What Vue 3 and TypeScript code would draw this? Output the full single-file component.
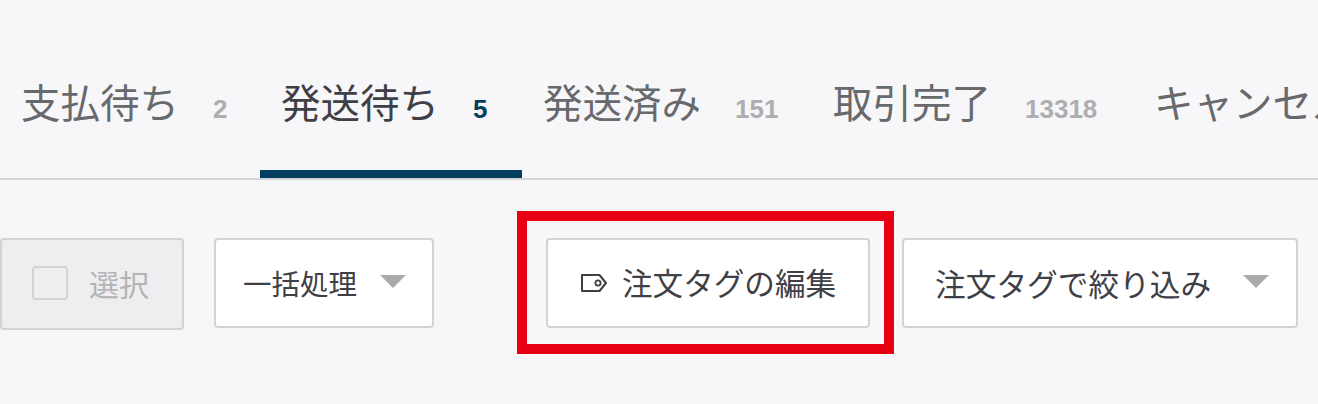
<script setup lang="ts">
const tabs = [
  { label: '支払待ち', count: '2', w: 260 },
  { label: '発送待ち', count: '5', w: 262, active: true },
  { label: '発送済み', count: '151', w: 290 },
  { label: '取引完了', count: '13318', w: 321 },
  { label: 'キャンセル', count: '', w: 300 },
]
</script>

<template>
  <div class="page">
    <nav class="tabs">
      <div
        v-for="t in tabs"
        :key="t.label"
        class="tab"
        :class="{ active: t.active }"
        :style="{ width: t.w + 'px' }"
      >
        <span class="label">{{ t.label }}</span>
        <span v-if="t.count" class="count">{{ t.count }}</span>
      </div>
    </nav>
    <div class="toolbar">
      <button class="btn select">
        <span class="check"></span>
        <span>選択</span>
      </button>
      <button class="btn bulk">
        <span>一括処理</span>
        <span class="caret"></span>
      </button>
      <div class="highlighted">
        <button class="btn tag">
          <svg class="tag-icon" width="28" height="22" viewBox="0 0 28 22" fill="none">
            <path d="M2 3H19.5L26 11L19.5 19H2Z" stroke="#3f4045" stroke-width="2" stroke-linejoin="round" />
            <circle cx="18" cy="11" r="2.6" stroke="#3f4045" stroke-width="1.8" />
          </svg>
          <span>注文タグの編集</span>
        </button>
        <span class="frame"></span>
      </div>
      <button class="btn filter">
        <span>注文タグで絞り込み</span>
        <span class="caret"></span>
      </button>
    </div>
  </div>
</template>

<style>
html, body { margin: 0; background: #f7f7f9; overflow: hidden; }
</style>

<style scoped>
.page {
  width: 1318px;
  height: 404px;
  overflow: hidden;
  background: #f7f7f9;
  font-family: "Liberation Sans", "Noto Sans CJK JP", sans-serif;
  color: #3f4045;
}
.tabs {
  display: flex;
  height: 178px;
  border-bottom: 2px solid #d3d3d6;
  overflow: hidden;
}
.tab {
  flex: none;
  box-sizing: border-box;
  height: 178px;
  padding: 79px 0 0 21px;
  display: flex;
  align-items: flex-start;
  white-space: nowrap;
  color: #68696d;
}
.label {
  font-size: 39.5px;
  line-height: 50px;
}
.count {
  margin-left: 34px;
  font-size: 26px;
  line-height: 60px;
  font-weight: 700;
  color: #aeaeb1;
}
.tab.active {
  border-bottom: 8px solid #03405f;
  color: #3f4045;
}
.tab.active .count { color: #03405f; }
.toolbar {
  display: flex;
  align-items: flex-start;
  padding-top: 58px;
}
.btn {
  box-sizing: border-box;
  height: 90px;
  margin: 0;
  display: flex;
  align-items: center;
  flex: none;
  background: #fff;
  border: 2px solid #d3d3d6;
  border-radius: 4px;
  font-family: inherit;
  font-size: 28.5px;
  color: #3f4045;
  white-space: nowrap;
  padding: 0 0 2px;
}
.select {
  width: 184px;
  height: 92px;
  background: #eeeef0;
  color: #b4b4b7;
  padding-left: 30px;
  font-size: 30px;
}
.check {
  width: 36px;
  height: 34px;
  box-sizing: border-box;
  border: 2px solid #d3d3d6;
  border-radius: 4px;
  margin-right: 21px;
}
.bulk {
  width: 220px;
  margin-left: 30px;
  padding-left: 27px;
}
.caret {
  width: 0;
  height: 0;
  border-left: 13.5px solid transparent;
  border-right: 13.5px solid transparent;
  border-top: 13px solid #aaaaad;
  margin-left: 23px;
  margin-top: -2px;
}
.highlighted {
  position: relative;
  margin-left: 112px;
  flex: none;
}
.tag {
  width: 324px;
  padding-left: 32px;
  font-size: 30.6px;
}
.tag-icon { margin-right: 14px; margin-top: 2px; }
.frame {
  position: absolute;
  left: -29px;
  right: -24px;
  top: -27px;
  bottom: -26px;
  border: 10px solid #e60012;
  pointer-events: none;
}
.filter {
  width: 396px;
  margin-left: 32px;
  padding-left: 31px;
  font-size: 30.7px;
}
.filter .caret { margin-left: 32px; }
</style>
